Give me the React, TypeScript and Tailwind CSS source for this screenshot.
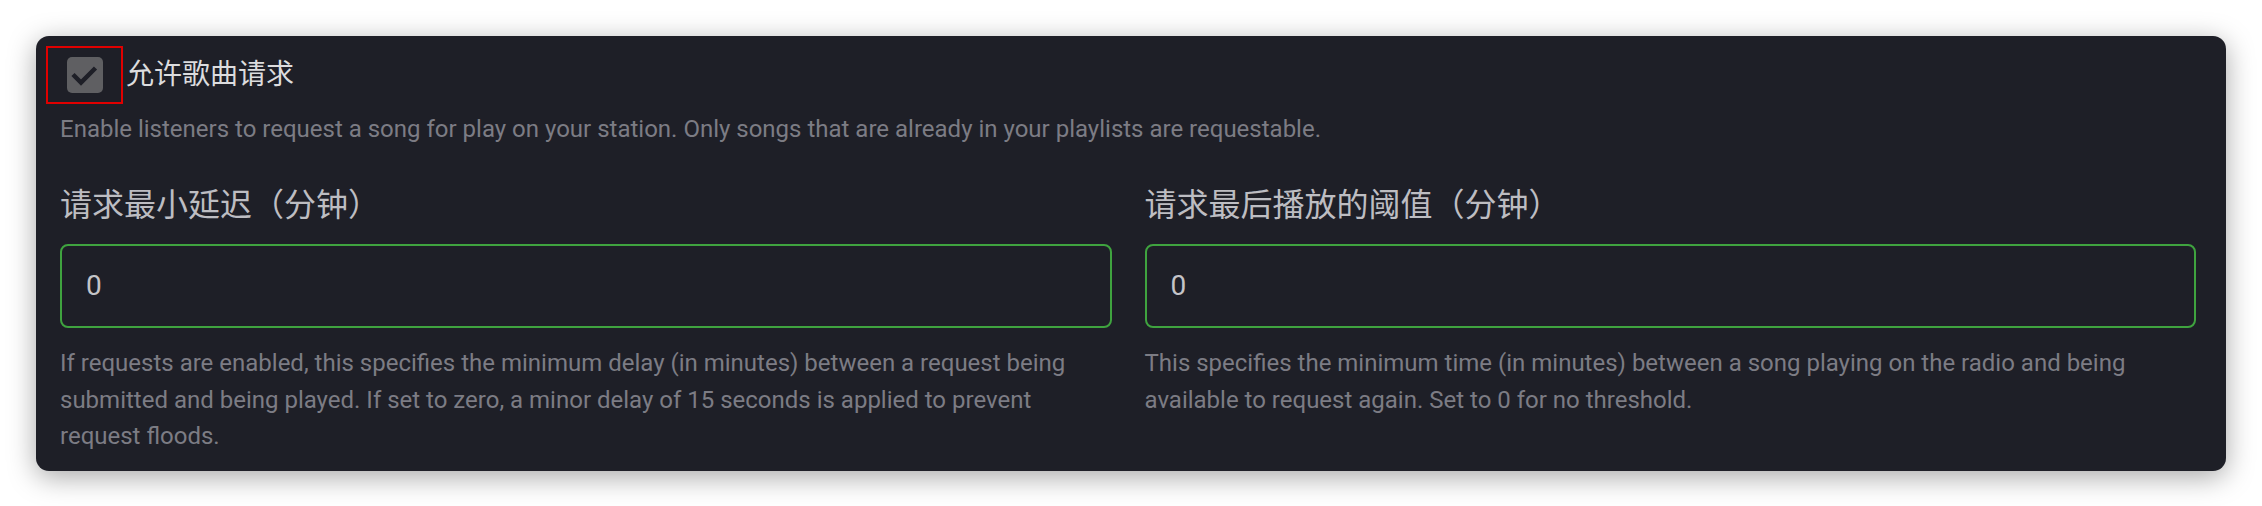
import React from "react";

const font = { fontFamily: "Roboto, 'Noto Sans CJK SC', sans-serif" };

function Field({ label, help }: { label: string; help: string }) {
  return (
    <div className="flex flex-col">
      <div className="text-[32px] leading-[42px] text-[#bdbdc2]">{label}</div>
      <div className="mt-[18px] h-[84px] rounded-[8px] border-2 border-[#3fa33f] flex items-center px-[24px]">
        <span className="text-[28px] text-[#c4c4c8]">0</span>
      </div>
      <p className="mt-[17px] text-[24px] leading-[36.5px] text-[#7c7c84]">{help}</p>
    </div>
  );
}

export default function App() {
  return (
    <div className="min-h-screen bg-white pt-[36px] px-[36px]" style={font}>
      <div className="rounded-[13px] bg-[#1e1f27] shadow-[0_6px_28px_rgba(0,0,0,0.35)] pt-[10px] pb-[16px] pl-[24px] pr-[30px]">
        <div className="flex items-center -ml-[14px]">
          <div className="w-[77px] h-[58px] border-2 border-[#e00000] flex items-center justify-center">
            <svg width="36" height="36" viewBox="0 0 36 36">
              <rect x="0" y="0" width="36" height="36" rx="5" fill="#5f5f62" />
              <path d="M6 17.5 L14 25.5 L28.5 11" fill="none" stroke="#1e1f27" strokeWidth="4.5" strokeLinecap="butt" strokeLinejoin="miter" />
            </svg>
          </div>
          <span className="ml-[3px] text-[28px] text-[#dcdcde]">允许歌曲请求</span>
        </div>
        <p className="mt-[7px] text-[24px] leading-[36px] text-[#7c7c84]">
          Enable listeners to request a song for play on your station. Only songs that are already in your playlists are requestable.
        </p>
        <div className="mt-[37px] grid grid-cols-2 gap-x-[33px]">
          <Field
            label="请求最小延迟（分钟）"
            help="If requests are enabled, this specifies the minimum delay (in minutes) between a request being submitted and being played. If set to zero, a minor delay of 15 seconds is applied to prevent request floods."
          />
          <Field
            label="请求最后播放的阈值（分钟）"
            help="This specifies the minimum time (in minutes) between a song playing on the radio and being available to request again. Set to 0 for no threshold."
          />
        </div>
      </div>
    </div>
  );
}
